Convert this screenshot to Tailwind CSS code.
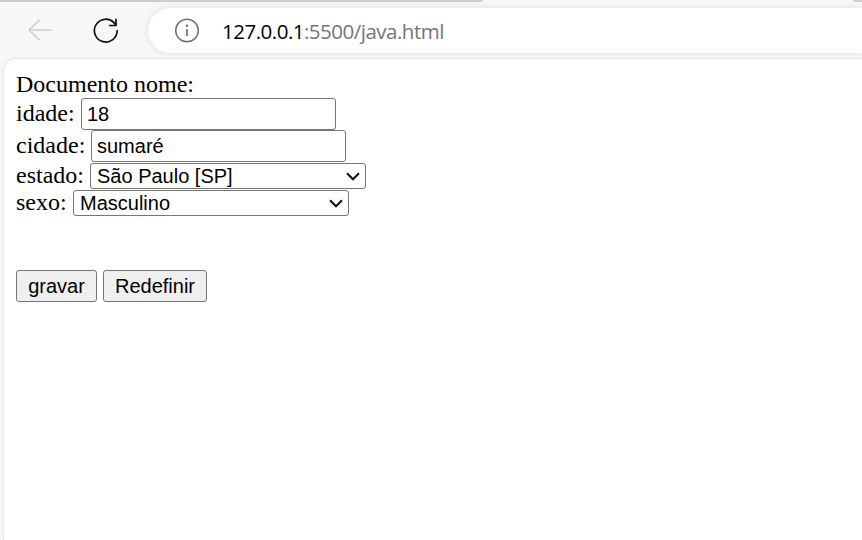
<!DOCTYPE html>
<html lang="pt-BR">
<head>
<meta charset="utf-8">
<title>Documento</title>
<script src="https://cdn.jsdelivr.net/npm/@tailwindcss/browser@4"></script>
</head>
<body class="w-[862px] h-[540px] overflow-hidden bg-[#f7f7f7] flex flex-col text-black">
  <div class="h-[2px] shrink-0 flex justify-between">
    <div class="w-[483px] bg-[#cdcdcd] rounded-br-[4px]"></div>
    <div class="w-[9px] bg-[#cdcdcd] rounded-bl-[4px]"></div>
  </div>
  <header class="h-[57px] shrink-0 flex pt-[6px] overflow-hidden">
    <div class="w-[148px] h-[45px] shrink-0 flex items-center pl-[27px]">
      <svg class="w-[26px] h-[24px]" viewBox="0 0 26 24" fill="none" stroke="#cdcdcd" stroke-width="1.5" stroke-linecap="round" stroke-linejoin="round"><path d="M24.2 11H1.8M12.3 1.2L1.8 11l10.5 9.8"/></svg>
      <svg class="w-[28px] h-[28px] ml-[39px]" viewBox="0 0 28 28" fill="none" stroke="#111" stroke-width="1.7" stroke-linecap="round" stroke-linejoin="round"><path d="M25.2 13.6A11.4 11.4 0 1 1 21.9 5.6l2.2 2.6M24 2.3v6.2h-6.4"/></svg>
    </div>
    <div class="flex-1 h-[45px] bg-white rounded-l-full flex items-center pl-[26px] shadow-[0_0_6px_rgba(0,0,0,0.10)]">
      <svg class="w-[26px] h-[26px]" viewBox="0 0 26 26" fill="none"><circle cx="13" cy="12.5" r="11.3" stroke="#707070" stroke-width="1.5"/><path d="M13 11v7" stroke="#707070" stroke-width="1.7"/><circle cx="13" cy="7.8" r="1.2" fill="#707070"/></svg>
      <div class="ml-[22px] text-[20.5px] tracking-[-0.5px] leading-[28px] whitespace-nowrap text-[#767676] font-['Open_Sans','Noto_Sans',sans-serif]"><span class="text-black">127.0.0.1</span>:5500/java.html</div>
    </div>
  </header>
  <main class="ml-[4px] flex-1 bg-white rounded-tl-[12px] shadow-[0_0_2px_1px_rgba(0,0,0,0.08)] pt-[12px] pl-[12px] font-['Liberation_Serif',serif] text-[24px] leading-[27px]">
    <form>
      <div class="h-[27px]">Documento nome:</div>
      <div class="h-[32px] flex items-center"><label class="w-[65px] pb-[2px]">idade:</label><input value="18" class="w-[255px] h-[32px] border border-[#767676] rounded-[3px] px-[5px] text-[20px] font-['Liberation_Sans',sans-serif]"></div>
      <div class="h-[32px] flex items-center"><label class="w-[75px] pb-[2px]">cidade:</label><input value="sumaré" class="w-[255px] h-[32px] border border-[#767676] rounded-[3px] px-[5px] text-[20px] font-['Liberation_Sans',sans-serif]"></div>
      <div class="h-[28px] flex items-center"><label class="w-[74px] pb-[1px]">estado:</label>
        <div class="w-[276px] h-[26px] border border-[#767676] rounded-[3px] pl-[6px] pr-[5px] flex items-center justify-between text-[20px] leading-[24px] font-['Liberation_Sans',sans-serif]"><span>São Paulo [SP]</span><svg class="w-[14px] h-[9px]" viewBox="0 0 14 9" fill="none" stroke="#111" stroke-width="2.1"><path d="M1 1.2l6 6 6-6"/></svg></div></div>
      <div class="h-[26px] flex items-center"><label class="w-[57px] pb-[1px]">sexo:</label>
        <div class="w-[276px] h-[26px] border border-[#767676] rounded-[3px] pl-[6px] pr-[5px] flex items-center justify-between text-[20px] leading-[24px] font-['Liberation_Sans',sans-serif]"><span>Masculino</span><svg class="w-[14px] h-[9px]" viewBox="0 0 14 9" fill="none" stroke="#111" stroke-width="2.1"><path d="M1 1.2l6 6 6-6"/></svg></div></div>
      <div class="mt-[54px] flex gap-[6px] text-[20px] font-['Liberation_Sans',sans-serif]">
        <button type="button" class="w-[81px] h-[32px] border border-[#767676] rounded-[3px] bg-[#efefef]">gravar</button>
        <button type="reset" class="w-[104px] h-[32px] border border-[#767676] rounded-[3px] bg-[#efefef]">Redefinir</button>
      </div>
    </form>
  </main>
</body>
</html>
